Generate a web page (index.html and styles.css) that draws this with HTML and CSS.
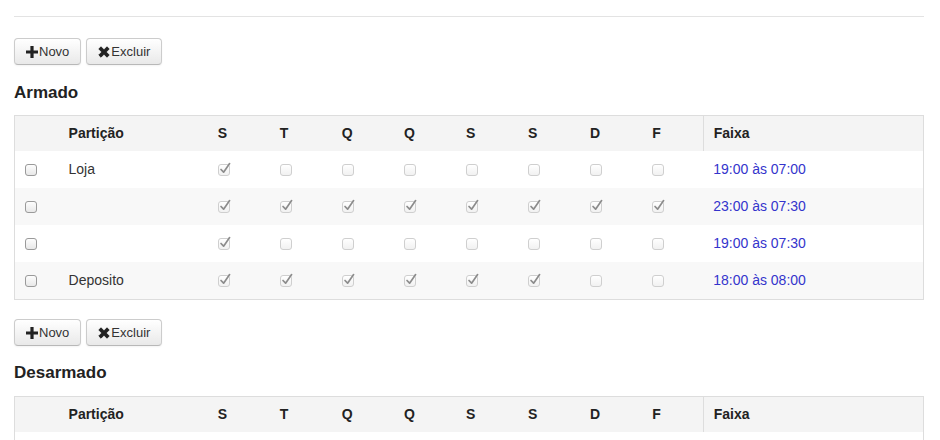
FILE: index.html
```html
<!DOCTYPE html>
<html lang="pt">
<head>
<meta charset="utf-8">
<link rel="stylesheet" href="styles.css">
</head>
<body>
<div class="page">
  <hr class="rule">

  <div class="toolbar">
    <button class="btn"><svg class="ico" viewBox="0 0 12 12"><path d="M4.4 0h3.2v4.4H12v3.2H7.6V12H4.4V7.6H0V4.4h4.4z"/></svg>Novo</button>
    <button class="btn"><svg class="ico" viewBox="0 0 12 12"><path d="M0.8 3L3 0.8 6 3.8 9 0.8 11.2 3 8.2 6 11.2 9 9 11.2 6 8.2 3 11.2 0.8 9 3.8 6z" stroke="#222" stroke-width="0.9" stroke-linejoin="round"/></svg>Excluir</button>
  </div>

  <h4 class="title">Armado</h4>

  <table class="grid">
    <colgroup>
      <col class="c-sel"><col class="c-name">
      <col class="c-day"><col class="c-day"><col class="c-day"><col class="c-day">
      <col class="c-day"><col class="c-day"><col class="c-day"><col class="c-day">
      <col class="c-range">
    </colgroup>
    <thead>
      <tr>
        <th></th><th>Partição</th>
        <th>S</th><th>T</th><th>Q</th><th>Q</th><th>S</th><th>S</th><th>D</th><th>F</th>
        <th class="range-h">Faixa</th>
      </tr>
    </thead>
    <tbody>
      <tr>
        <td><span class="cb sel"></span></td><td>Loja</td>
        <td><span class="cb on"><svg viewBox="0 0 14 14"><path d="M3 7.5L5.6 10.2 11.6 1.6"/></svg></span></td>
        <td><span class="cb"></span></td><td><span class="cb"></span></td><td><span class="cb"></span></td>
        <td><span class="cb"></span></td><td><span class="cb"></span></td><td><span class="cb"></span></td><td><span class="cb"></span></td>
        <td class="range">19:00 às 07:00</td>
      </tr>
      <tr>
        <td><span class="cb sel"></span></td><td></td>
        <td><span class="cb on"><svg viewBox="0 0 14 14"><path d="M3 7.5L5.6 10.2 11.6 1.6"/></svg></span></td>
        <td><span class="cb on"><svg viewBox="0 0 14 14"><path d="M3 7.5L5.6 10.2 11.6 1.6"/></svg></span></td>
        <td><span class="cb on"><svg viewBox="0 0 14 14"><path d="M3 7.5L5.6 10.2 11.6 1.6"/></svg></span></td>
        <td><span class="cb on"><svg viewBox="0 0 14 14"><path d="M3 7.5L5.6 10.2 11.6 1.6"/></svg></span></td>
        <td><span class="cb on"><svg viewBox="0 0 14 14"><path d="M3 7.5L5.6 10.2 11.6 1.6"/></svg></span></td>
        <td><span class="cb on"><svg viewBox="0 0 14 14"><path d="M3 7.5L5.6 10.2 11.6 1.6"/></svg></span></td>
        <td><span class="cb on"><svg viewBox="0 0 14 14"><path d="M3 7.5L5.6 10.2 11.6 1.6"/></svg></span></td>
        <td><span class="cb on"><svg viewBox="0 0 14 14"><path d="M3 7.5L5.6 10.2 11.6 1.6"/></svg></span></td>
        <td class="range">23:00 às 07:30</td>
      </tr>
      <tr>
        <td><span class="cb sel"></span></td><td></td>
        <td><span class="cb on"><svg viewBox="0 0 14 14"><path d="M3 7.5L5.6 10.2 11.6 1.6"/></svg></span></td>
        <td><span class="cb"></span></td><td><span class="cb"></span></td><td><span class="cb"></span></td>
        <td><span class="cb"></span></td><td><span class="cb"></span></td><td><span class="cb"></span></td><td><span class="cb"></span></td>
        <td class="range">19:00 às 07:30</td>
      </tr>
      <tr>
        <td><span class="cb sel"></span></td><td>Deposito</td>
        <td><span class="cb on"><svg viewBox="0 0 14 14"><path d="M3 7.5L5.6 10.2 11.6 1.6"/></svg></span></td>
        <td><span class="cb on"><svg viewBox="0 0 14 14"><path d="M3 7.5L5.6 10.2 11.6 1.6"/></svg></span></td>
        <td><span class="cb on"><svg viewBox="0 0 14 14"><path d="M3 7.5L5.6 10.2 11.6 1.6"/></svg></span></td>
        <td><span class="cb on"><svg viewBox="0 0 14 14"><path d="M3 7.5L5.6 10.2 11.6 1.6"/></svg></span></td>
        <td><span class="cb on"><svg viewBox="0 0 14 14"><path d="M3 7.5L5.6 10.2 11.6 1.6"/></svg></span></td>
        <td><span class="cb on"><svg viewBox="0 0 14 14"><path d="M3 7.5L5.6 10.2 11.6 1.6"/></svg></span></td>
        <td><span class="cb"></span></td><td><span class="cb"></span></td>
        <td class="range">18:00 às 08:00</td>
      </tr>
    </tbody>
  </table>

  <div class="toolbar toolbar-2">
    <button class="btn"><svg class="ico" viewBox="0 0 12 12"><path d="M4.4 0h3.2v4.4H12v3.2H7.6V12H4.4V7.6H0V4.4h4.4z"/></svg>Novo</button>
    <button class="btn"><svg class="ico" viewBox="0 0 12 12"><path d="M0.8 3L3 0.8 6 3.8 9 0.8 11.2 3 8.2 6 11.2 9 9 11.2 6 8.2 3 11.2 0.8 9 3.8 6z" stroke="#222" stroke-width="0.9" stroke-linejoin="round"/></svg>Excluir</button>
  </div>

  <h4 class="title title-2">Desarmado</h4>

  <table class="grid">
    <colgroup>
      <col class="c-sel"><col class="c-name">
      <col class="c-day"><col class="c-day"><col class="c-day"><col class="c-day">
      <col class="c-day"><col class="c-day"><col class="c-day"><col class="c-day">
      <col class="c-range">
    </colgroup>
    <thead>
      <tr>
        <th></th><th>Partição</th>
        <th>S</th><th>T</th><th>Q</th><th>Q</th><th>S</th><th>S</th><th>D</th><th>F</th>
        <th class="range-h">Faixa</th>
      </tr>
    </thead>
    <tbody>
      <tr>
        <td><span class="cb sel"></span></td><td></td>
        <td><span class="cb"></span></td><td><span class="cb"></span></td><td><span class="cb"></span></td><td><span class="cb"></span></td>
        <td><span class="cb"></span></td><td><span class="cb"></span></td><td><span class="cb"></span></td><td><span class="cb"></span></td>
        <td class="range"></td>
      </tr>
    </tbody>
  </table>
</div>
</body>
</html>
```

FILE: styles.css
```css
html, body {
  margin: 0;
  padding: 0;
  background: #fff;
}

body {
  font-family: "Liberation Sans", Arial, Helvetica, sans-serif;
  font-size: 14px;
  line-height: 17px;
  color: #333;
}

.page {
  padding: 16px 16px 0 14px;
}

.rule {
  margin: 0 0 21px 0;
  border: 0;
  border-top: 1px solid #e3e3e3;
  height: 0;
}

.toolbar {
  display: flex;
  gap: 5px;
}

.toolbar-2 {
  margin-top: 19px;
}

.btn {
  display: inline-flex;
  align-items: center;
  height: 27px;
  padding: 0 11px 0 11px;
  font-family: inherit;
  font-size: 13px;
  color: #333;
  background: linear-gradient(#ffffff, #e9e9e9);
  border: 1px solid #cccccc;
  border-bottom-color: #b8b8b8;
  border-radius: 4px;
  box-shadow: inset 0 1px 0 rgba(255,255,255,0.3), 0 1px 2px rgba(0,0,0,0.05);
}

.ico {
  width: 12px;
  height: 12px;
  margin-right: 1px;
  fill: #222;
  flex: none;
}

.title {
  margin: 18px 0 12px 0;
  font-size: 17px;
  line-height: 20px;
  font-weight: bold;
  color: #222;
}

.title-2 {
  margin-top: 17px;
  margin-bottom: 13px;
}

.grid {
  width: 910px;
  border-collapse: collapse;
  table-layout: fixed;
  border: 1px solid #dddddd;
}

.c-sel { width: 44px; }
.c-name { width: 148px; }
.c-day { width: 62px; }
.c-range { width: 220px; }

.grid th {
  background: #f4f4f4;
  text-align: left;
  font-weight: bold;
  color: #222;
  padding: 9px 10px 9px 11px;
  line-height: 17px;
}

.grid th:nth-child(2) { padding-left: 10px; }

.grid th.range-h {
  border-left: 1px solid #dddddd;
  padding-left: 10px;
}

.grid td {
  padding: 10px 10px 10px 11px;
  line-height: 17px;
  vertical-align: middle;
  height: 17px;
}

.grid td:first-child { padding-left: 10px; }
.grid td:nth-child(2) { padding-left: 10px; }
.grid td.range { padding-left: 10px; color: #3434cc; }

.grid tbody tr:nth-child(even) td {
  background: #f8f8f8;
}

.cb {
  position: relative;
  display: block;
  width: 10px;
  height: 10px;
  border: 1px solid #cfcfcf;
  border-radius: 3px;
  background: linear-gradient(#ffffff, #f1f1f1);
}

.cb.sel {
  border-color: #9a9a9a;
  background: linear-gradient(#fdfdfd, #e8e8e8);
}

.cb svg {
  position: absolute;
  left: -1px;
  top: -3px;
  width: 14px;
  height: 14px;
  fill: none;
  stroke: #8c8c8c;
  stroke-width: 1.7;
  stroke-linecap: round;
  stroke-linejoin: round;
}
```
